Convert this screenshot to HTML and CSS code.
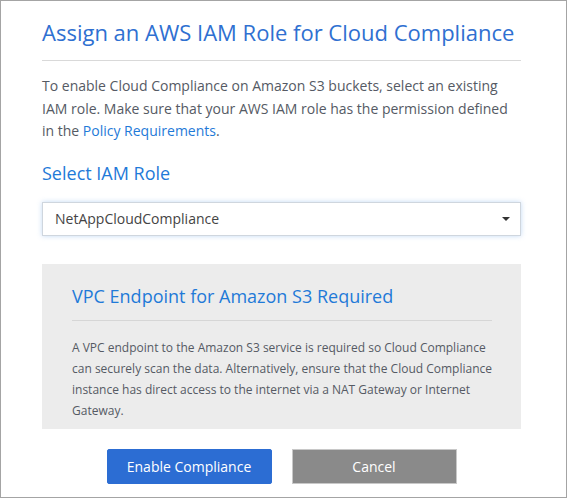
FILE: index.html
```html
<!DOCTYPE html>
<html>
<head>
<meta charset="utf-8">
<link rel="stylesheet" href="styles.css">
</head>
<body>
<div class="dialog">
  <h1 class="title">Assign an AWS IAM Role for Cloud Compliance</h1>
  <p class="intro">To enable Cloud Compliance on Amazon S3 buckets, select an existing IAM role. Make sure that your AWS IAM role has the permission defined in the <a class="link">Policy Requirements</a>.</p>
  <h2 class="label">Select IAM Role</h2>
  <div class="select">
    <span class="select-value">NetAppCloudCompliance</span>
    <span class="caret"></span>
  </div>
  <div class="notice">
    <h3 class="notice-title">VPC Endpoint for Amazon S3 Required</h3>
    <p class="notice-text">A VPC endpoint to the Amazon S3 service is required so Cloud Compliance can securely scan the data. Alternatively, ensure that the Cloud Compliance instance has direct access to the internet via a NAT Gateway or Internet Gateway.</p>
  </div>
  <div class="actions">
    <button class="btn btn-primary">Enable Compliance</button>
    <button class="btn btn-cancel">Cancel</button>
  </div>
</div>
</body>
</html>
```
FILE: styles.css
```css
* { box-sizing: border-box; }
html, body { margin: 0; padding: 0; background: #fff; }
body { font-family: "Open Sans", "Liberation Sans", sans-serif; }
.dialog {
  width: 567px;
  height: 498px;
  border: 1px solid #a4a4a4;
  padding: 0 45px 0 41px;
  display: flex;
  flex-direction: column;
}
.title {
  margin: 0;
  padding-top: 16px;
  font-size: 22px;
  font-weight: 400;
  line-height: 30px;
  color: #2f70d1;
  border-bottom: 1px solid #d9d9d9;
  height: 60px;
  white-space: nowrap;
}
.intro {
  margin: 14px 0 0 0;
  font-size: 14px;
  line-height: 22.5px;
  color: #555a64;
}
.link { color: #1f7ad8; }
.label {
  margin: 18px 0 0 0;
  font-size: 18px;
  font-weight: 400;
  line-height: 24px;
  color: #1f7ad8;
}
.select {
  margin-top: 17px;
  height: 34px;
  border: 1px solid #cfd6de;
  box-shadow: 0 0 5px rgba(120, 170, 230, 0.45);
  display: flex;
  align-items: center;
  padding: 0 10px 0 12px;
  justify-content: space-between;
}
.select-value { font-size: 14px; color: #444; }
.caret {
  width: 0; height: 0;
  border-left: 4px solid transparent;
  border-right: 4px solid transparent;
  border-top: 4px solid #333;
}
.notice {
  margin-top: 28px;
  background: #ececec;
  padding: 18px 29px 0 30px;
  height: 165px;
}
.notice-title {
  margin: 0;
  font-size: 18px;
  font-weight: 400;
  line-height: 28px;
  color: #1f7ad8;
  padding-bottom: 10px;
  border-bottom: 1px solid #d6d6d6;
}
.notice-text {
  margin: 16px 0 0 0;
  font-size: 12px;
  line-height: 21px;
  color: #555a64;
}
.actions {
  display: flex;
  justify-content: center;
  gap: 20px;
  margin-top: 20px;
}
.btn {
  width: 165px;
  height: 35px;
  font-family: inherit;
  font-size: 14px;
  color: #fff;
  border-radius: 2px;
  cursor: pointer;
}
.btn-primary { background: #2c6dd3; border: 1px solid #2c6dd3; }
.btn-cancel { background: #8a8a8a; border: 1px solid #c8c8c8; border-radius: 0; }
```
